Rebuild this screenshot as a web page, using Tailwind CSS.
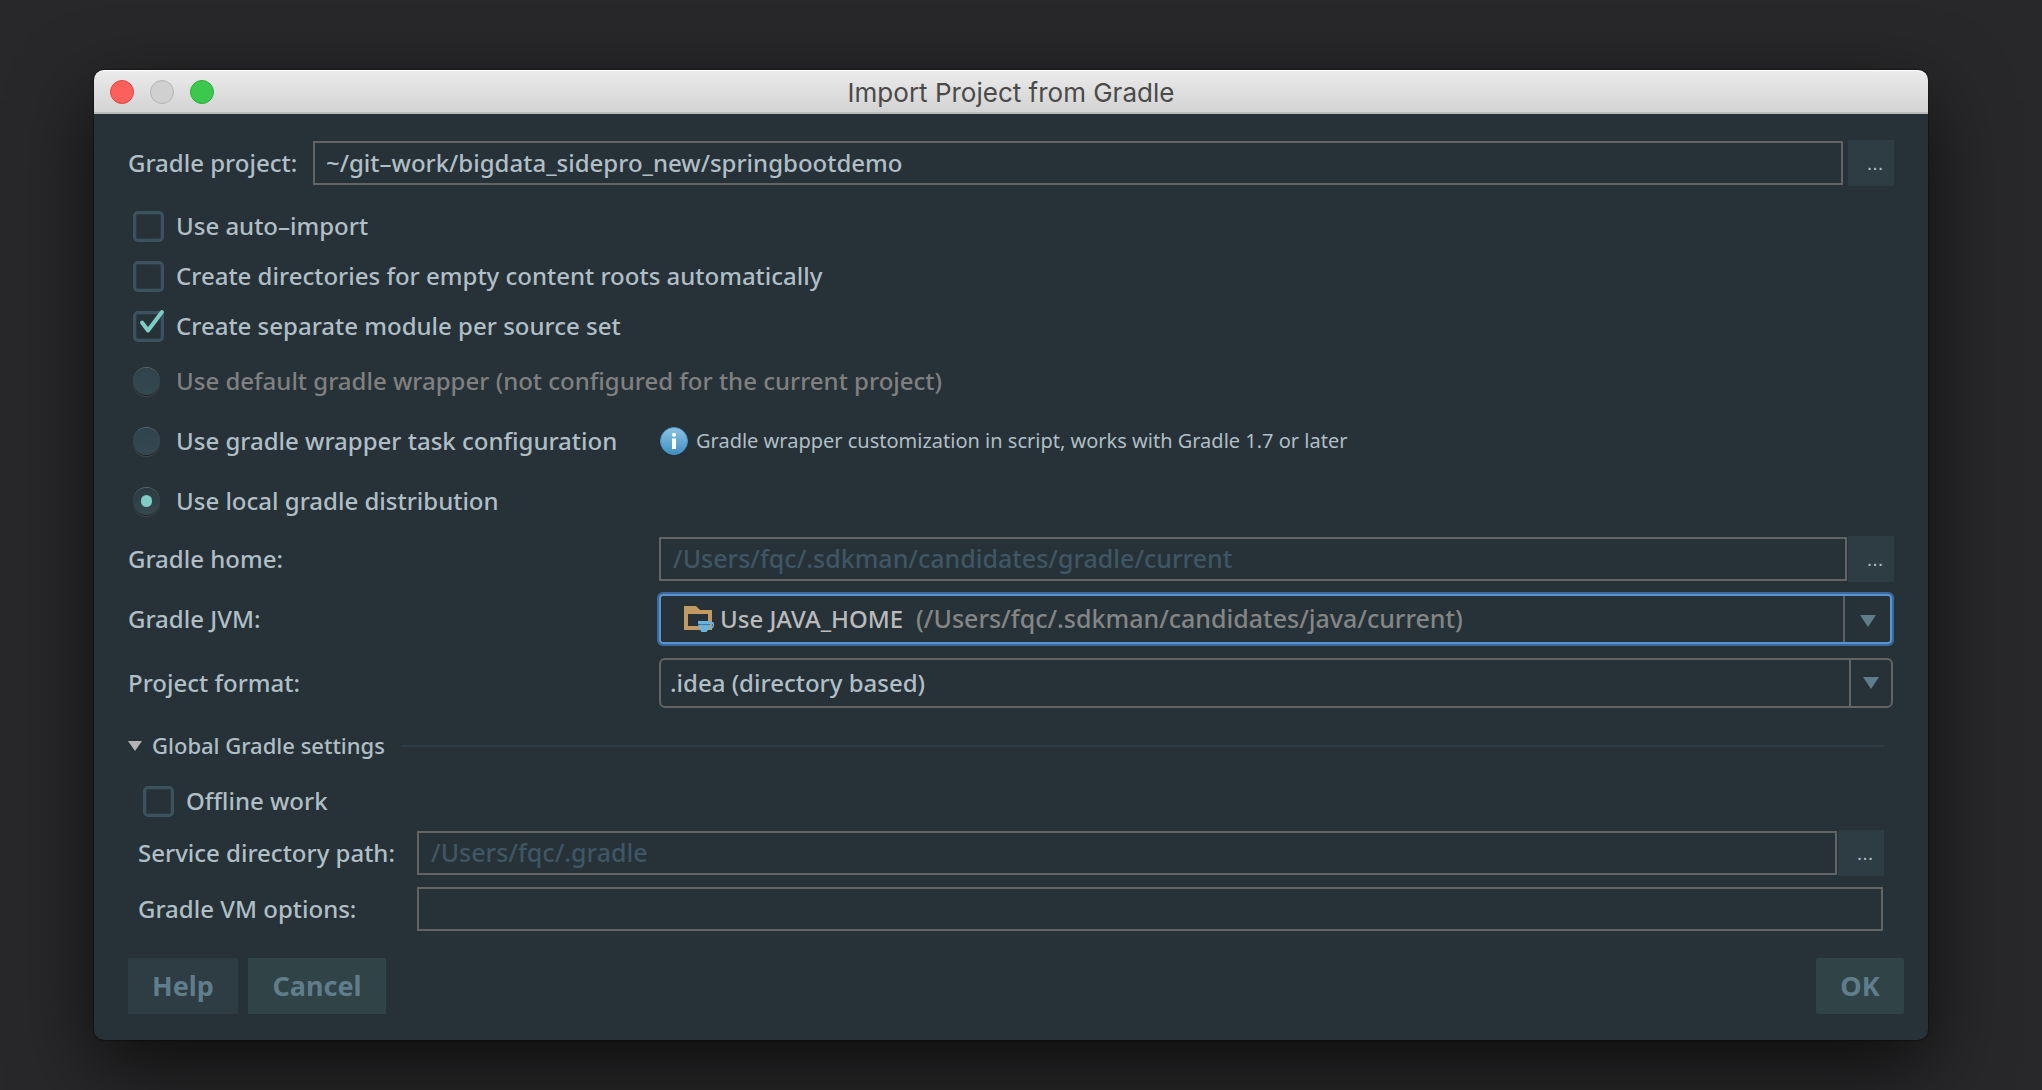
<!DOCTYPE html>
<html lang="en">
<head>
<meta charset="utf-8">
<meta name="viewport" content="width=device-width, initial-scale=1">
<title>Import Project from Gradle</title>
<script src="https://cdn.jsdelivr.net/npm/@tailwindcss/browser@4"></script>
</head>
<body class="min-h-screen bg-[#28282a] pt-[70px] pr-[114px] pb-[50px] pl-[94px] font-['Noto_Sans',sans-serif] text-2xl font-medium text-[#b0bec5]">
<main class="rounded-[10px] bg-[#263238] shadow-[0_0_2px_#000,0_28px_80px_rgba(0,0,0,0.65)]">

  <!-- Title bar -->
  <header class="grid h-11 grid-cols-[1fr_auto_1fr] items-center rounded-t-[10px] border-t border-b-2 border-t-white border-b-[#b9b9b9] bg-linear-to-b from-[#ebebeb] to-[#d3d3d3] px-4">
    <div class="flex gap-4">
      <button type="button" aria-label="Close" class="size-6 rounded-full border border-[#e0443f] bg-[#fc605c]"></button>
      <button type="button" aria-label="Minimize" disabled class="size-6 rounded-full border border-[#b4b4b4] bg-[#d0d0d0]"></button>
      <button type="button" aria-label="Zoom" class="size-6 rounded-full border border-[#2bac3a] bg-[#3cc84c]"></button>
    </div>
    <h1 class="pt-[2px] font-['Inter',sans-serif] text-[26px] leading-8 font-normal text-[#4a4a4a]">Import Project from Gradle</h1>
    <span></span>
  </header>

  <form class="pt-[26px] pr-6 pb-[26px] pl-[34px]">
    <div class="pr-[10px]">
      <div class="flex items-center">
        <label for="project" class="w-[185px] shrink-0">Gradle project:</label>
        <input id="project" type="text" value="~/git–work/bigdata_sidepro_new/springbootdemo" class="h-11 min-w-0 flex-1 border-2 border-[#646464] bg-transparent px-[11px] pb-[2px] outline-none">
        <button type="button" aria-label="Browse project" class="ml-[5px] size-[46px] shrink-0 bg-[#2e3c43] pl-2 font-['Liberation_Sans',sans-serif] text-xl font-normal">...</button>
      </div>

      <div class="mt-[15px]">
        <label class="flex h-[50px] items-center gap-3 pl-[5px]">
          <input type="checkbox" class="size-[31px] appearance-none rounded-[5px] border-3 border-[#3c525f] shadow-[inset_0_0_0_1px_#2c3c46]">
          Use auto–import
        </label>
        <label class="flex h-[50px] items-center gap-3 pl-[5px]">
          <input type="checkbox" class="size-[31px] appearance-none rounded-[5px] border-3 border-[#3c525f] shadow-[inset_0_0_0_1px_#2c3c46]">
          Create directories for empty content roots automatically
        </label>
        <label class="flex h-[50px] items-center gap-3 pl-[5px]">
          <span class="relative flex">
            <input type="checkbox" checked class="size-[31px] appearance-none rounded-[5px] border-3 border-[#3c525f] shadow-[inset_0_0_0_1px_#2c3c46]">
            <svg class="pointer-events-none absolute inset-0 size-[31px] overflow-visible" viewBox="0 0 31 31" fill="none" stroke="#80cbc4" stroke-width="4" stroke-linecap="round" stroke-linejoin="round"><path d="M9 11.500L15 19.500L29 1"/></svg>
          </span>
          Create separate module per source set
        </label>
      </div>

      <div>
        <label class="flex h-[60px] items-center gap-4 pl-[5px] text-[#808080]">
          <input type="radio" name="dist" disabled class="size-[27px] appearance-none rounded-full bg-linear-to-b from-[#31434d] to-[#35474f] shadow-[0_-1px_0_#56656c,0_1px_0_#1c2529,0_2px_1px_#45484a]">
          Use default gradle wrapper (not configured for the current project)
        </label>
        <div class="flex h-[60px] items-center">
          <label class="flex w-[532px] shrink-0 items-center gap-4 pl-[5px]">
            <input type="radio" name="dist" class="size-[27px] appearance-none rounded-full bg-linear-to-b from-[#31434d] to-[#35474f] shadow-[0_-1px_0_#56656c,0_1px_0_#1c2529,0_2px_1px_#45484a]">
            Use gradle wrapper task configuration
          </label>
          <svg class="size-7 shrink-0" viewBox="0 0 28 28" aria-hidden="true">
            <defs><linearGradient id="info" x1="0" y1="0" x2="0" y2="1"><stop offset="0" stop-color="#8fc3e3"/><stop offset="1" stop-color="#3f8fc2"/></linearGradient></defs>
            <circle cx="14" cy="14" r="13.500" fill="url(#info)" stroke="#4795c6"/>
            <circle cx="14" cy="7.800" r="2" fill="#fff"/><rect x="12" y="11.500" width="4" height="10.500" fill="#fff"/>
          </svg>
          <p class="ml-2 text-xl font-normal">Gradle wrapper customization in script, works with Gradle 1.7 or later</p>
        </div>
        <label class="flex h-[60px] items-center gap-4 pl-[5px]">
          <span class="relative flex">
            <input type="radio" name="dist" checked class="size-[27px] appearance-none rounded-full bg-linear-to-b from-[#2c3b43] to-[#35474f] shadow-[0_-1px_0_#56656c,0_1px_0_#1c2529,0_2px_1px_#45484a]">
            <span class="pointer-events-none absolute inset-0 m-auto h-3 w-[11px] rounded-full bg-[#80cbc4]"></span>
          </span>
          Use local gradle distribution
        </label>
      </div>

      <div class="mt-[5px] flex items-center">
        <label for="home" class="w-[531px] shrink-0">Gradle home:</label>
        <input id="home" type="text" value="/Users/fqc/.sdkman/candidates/gradle/current" class="h-11 min-w-0 flex-1 border-2 border-[#646464] bg-transparent px-3 pb-[2px] text-[25px] text-[#405664] outline-none">
        <button type="button" aria-label="Browse Gradle home" class="ml-px size-[46px] shrink-0 bg-[#2e3c43] pl-2 font-['Liberation_Sans',sans-serif] text-xl font-normal">...</button>
      </div>

      <div class="mt-3 flex items-center pr-[2px]">
        <label for="jvm" class="w-[531px] shrink-0">Gradle JVM:</label>
        <div class="flex h-[50px] min-w-0 flex-1 items-center rounded-[4px] border-2 border-[#5b94d0] pl-[23px] ring-2 ring-[#3d6a9e]">
          <svg class="h-[27px] w-[31px] shrink-0" viewBox="0 0 31 27" aria-hidden="true">
            <path fill="#c09a62" fill-rule="evenodd" d="M0 0H12L16 4H28V24H0ZM4 8V20H24V8Z"/>
            <path fill="#6db3dc" d="M14 15H26V16H28.500A1.500 1.500 0 0 1 30 17.500V19.500A3 3 0 0 1 27 22.500H25L22.500 26H17.500L15 22Q14 20 14 15ZM26 18V21H27A1.500 1.500 0 0 0 28.500 19.500V18Z" fill-rule="evenodd"/>
            <path stroke="#3f7698" d="M14 18.500H26"/>
          </svg>
          <select id="jvm" class="ml-[5px] shrink-0 appearance-none bg-transparent text-[#bbbbbb] outline-none"><option>Use JAVA_HOME</option></select>
          <span class="ml-3 min-w-0 flex-1 truncate text-[25px] text-[#848585]">(/Users/fqc/.sdkman/candidates/java/current)</span>
          <span class="flex h-full w-[47px] shrink-0 items-center justify-center border-l-2 border-[#5c6062]">
            <svg class="mt-1 h-3 w-4" viewBox="0 0 16 12" aria-hidden="true"><path fill="#607d8b" d="M0 0H16L8 12Z"/></svg>
          </span>
        </div>
      </div>

      <div class="mt-[14px] flex items-center pr-px">
        <label for="format" class="w-[531px] shrink-0">Project format:</label>
        <div class="flex h-[50px] min-w-0 flex-1 items-center rounded-[6px] border-2 border-[#646464]">
          <select id="format" class="h-full min-w-0 flex-1 appearance-none bg-transparent pl-[9px] outline-none"><option>.idea (directory based)</option></select>
          <span class="flex h-full w-[42px] shrink-0 items-center justify-center border-l-2 border-[#646464]">
            <svg class="h-3 w-4" viewBox="0 0 16 12" aria-hidden="true"><path fill="#607d8b" d="M0 0H16L8 12Z"/></svg>
          </span>
        </div>
      </div>

      <section class="mt-[17px] pr-[10px]">
        <h2 class="flex h-[42px] items-center">
          <button type="button" aria-expanded="true" class="flex items-center gap-[10px] text-[22px]">
            <svg class="h-[10px] w-[14px]" viewBox="0 0 14 10" aria-hidden="true"><path fill="#b4b4b4" d="M0 0H14L7 10Z"/></svg>
            Global Gradle settings
          </button>
          <span class="ml-4 h-[2px] flex-1 bg-[#2e3c45]"></span>
        </h2>

        <div class="pl-[10px]">
          <label class="mt-[9px] flex h-[50px] items-center gap-3 pl-[5px]">
            <input type="checkbox" class="size-[31px] appearance-none rounded-[5px] border-3 border-[#3c525f] shadow-[inset_0_0_0_1px_#2c3c46]">
            Offline work
          </label>
          <div class="mt-1 flex items-center">
            <label for="service" class="w-[279px] shrink-0">Service directory path:</label>
            <input id="service" type="text" value="/Users/fqc/.gradle" class="h-11 min-w-0 flex-1 border-2 border-[#646464] bg-transparent px-3 pb-[2px] text-[25px] text-[#405664] outline-none">
            <button type="button" aria-label="Browse service directory" class="ml-px size-[46px] shrink-0 bg-[#2e3c43] pl-2 font-['Liberation_Sans',sans-serif] text-xl font-normal">...</button>
          </div>
          <div class="mt-[11px] flex items-center pr-px">
            <label for="vm" class="w-[279px] shrink-0">Gradle VM options:</label>
            <input id="vm" type="text" class="h-11 min-w-0 flex-1 border-2 border-[#646464] bg-transparent px-3 outline-none">
          </div>
        </div>
      </section>
    </div>

    <footer class="mt-[27px] flex h-14 gap-[10px] text-[27px] font-bold text-[#607d8b]">
      <button type="button" class="w-[110px] bg-[#2e3c43]">Help</button>
      <button type="button" class="w-[138px] bg-[#304347]">Cancel</button>
      <button type="submit" class="ml-auto w-[88px] rounded-[2px] bg-[#304347]">OK</button>
    </footer>
  </form>
</main>
</body>
</html>
